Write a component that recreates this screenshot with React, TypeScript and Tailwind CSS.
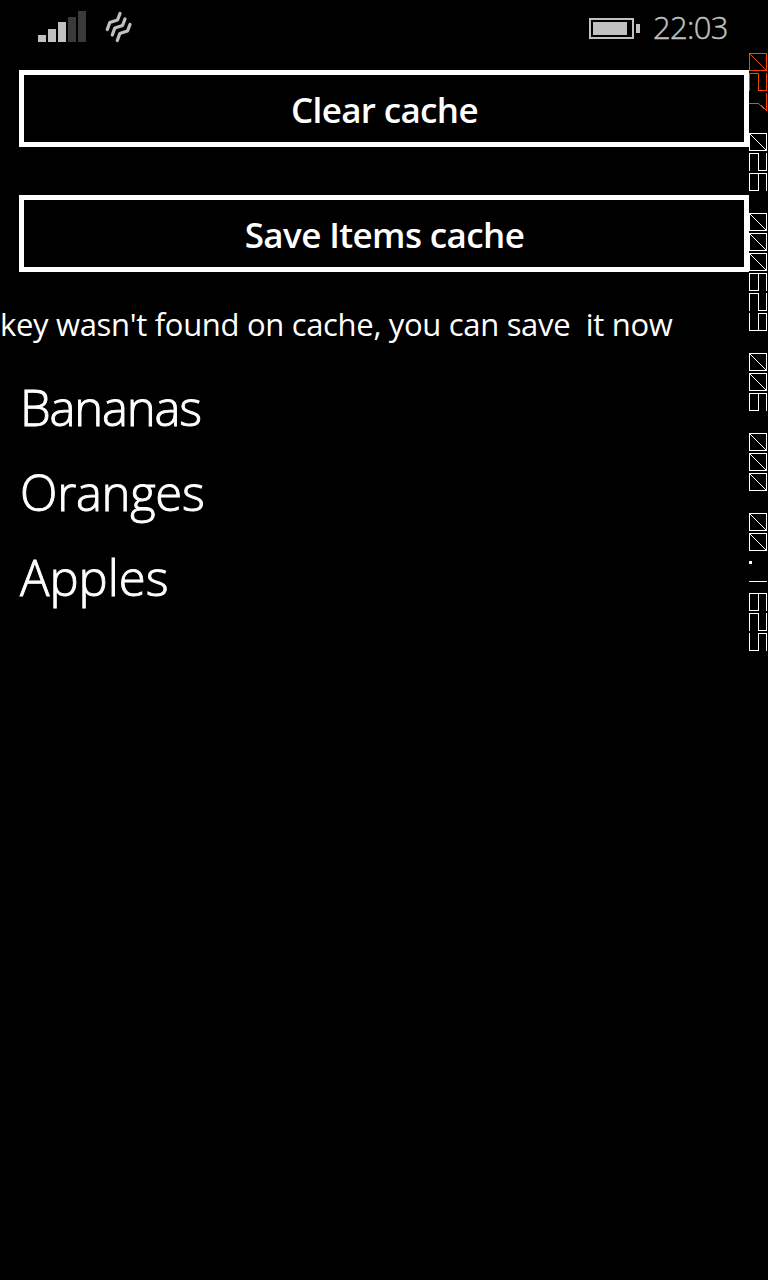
import React from "react";

type Glyph = { d: string };

const glyphs: Record<string, Glyph> = {
  "0": { d: "M.5 .5H17.5V17.5H.5ZM.5 .5L17.5 17.5" },
  "1": { d: "M0 8.5H18" },
  "2": { d: "M.5 18V.5H9.5V17.5H17.5V0" },
  "5": { d: "M.5 0V17.5H9.5V.5H17.5V18" },
  "6": { d: "M.5 0V17.5H17.5V.5H9.5V17.5" },
  "7": { d: "M0 10.5H9.5L17.5 17.5V0" },
  "9": { d: "M17.5 18V.5H.5V17.5H9.5V.5" },
  ".": { d: "M0 9.5H3M0 8.5H3M0 10.5H3" },
};

function Counter({ value, color }: { value: string; color: string }) {
  return (
    <div className={`flex flex-col gap-[2px] ${color}`}>
      {value.split("").map((c, i) => (
        <svg key={i} width="18" height="18" viewBox="0 0 18 18" fill="none" stroke="currentColor" shapeRendering="crispEdges" className="block">
          <path d={glyphs[c].d} />
        </svg>
      ))}
    </div>
  );
}

function StatusBar() {
  return (
    <header className="flex h-[70px] items-start text-[#c0c0c0]">
      <svg width="48" height="31" className="ml-[38px] mt-[11px]" shapeRendering="crispEdges">
        <path fill="#c0c0c0" d="M0 24h8v7H0zM10 18h8v13h-8zM20 11h8v20h-8z" />
        <path fill="#3a3a3a" d="M30 6h8v25h-8zM40 0h8v31h-8z" />
      </svg>
      <svg width="30" height="34" viewBox="0 0 30 34" className="ml-[18px] mt-[10px]" fill="none" stroke="#c0c0c0" strokeWidth="3.300" strokeLinecap="round" strokeLinejoin="round">
        <path d="M3.300 19.500L5.800 12.500L13.500 10L16 3.500" />
        <path d="M8.300 25L10.800 18L18.500 15.500L21 9" />
        <path d="M13.300 30.500L15.800 23.500L23.500 21L26 14.500" />
      </svg>
      <svg width="51" height="21" className="ml-auto mt-[18px]" shapeRendering="crispEdges">
        <path fill="none" stroke="#c0c0c0" strokeWidth="2" d="M1 1H44V20H1Z" />
        <path fill="#c0c0c0" d="M4 4h34v13H4zM47 6h4v9h-4z" />
      </svg>
      <time className="ml-[13px] mt-[7px] w-[115px] whitespace-nowrap font-['Open_Sans','Noto_Sans',sans-serif] text-[31px] font-light leading-[40px] tracking-[-0.7px] [-webkit-text-stroke:0.4px_currentColor]">22:03</time>
    </header>
  );
}

function PhoneButton({ children, spacing }: { children: React.ReactNode; spacing: string }) {
  return (
    <button className={`ml-[19px] block h-[77px] w-[730px] border-[5px] border-white pt-[1px] pl-[1px] text-center text-[35px] font-semibold leading-[65px] ${spacing}`}>
      {children}
    </button>
  );
}

export default function App() {
  return (
    <div className="relative h-[1280px] w-[768px] overflow-hidden bg-black font-['Open_Sans','Noto_Sans',sans-serif] text-white">
      <StatusBar />
      <main>
        <PhoneButton spacing="tracking-[-0.65px]">Clear cache</PhoneButton>
        <div className="h-[48px]" />
        <PhoneButton spacing="tracking-[-0.6px]">Save Items cache</PhoneButton>
        <p className="mt-[32px] h-[40px] whitespace-pre text-[31px] leading-[40px] tracking-[-0.32px]">key wasn't found on cache, you can save  it now</p>
        <ul className="ml-[20px] mt-[21px] text-[49px] font-light leading-[85px] [-webkit-text-stroke:0.9px_currentColor]">
          <li className="tracking-[-1.2px]">Bananas</li>
          <li className="tracking-[-0.3px]">Oranges</li>
          <li className="tracking-[0px]">Apples</li>
        </ul>
      </main>
      <aside className="absolute left-[749px] top-[53px] flex flex-col gap-[22px] bg-black">
        <Counter value="027" color="text-[#f04800]" />
        <Counter value="029" color="text-white" />
        <Counter value="000926" color="text-white" />
        <Counter value="009" color="text-white" />
        <Counter value="000" color="text-white" />
        <Counter value="00.1925" color="text-white" />
      </aside>
    </div>
  );
}
